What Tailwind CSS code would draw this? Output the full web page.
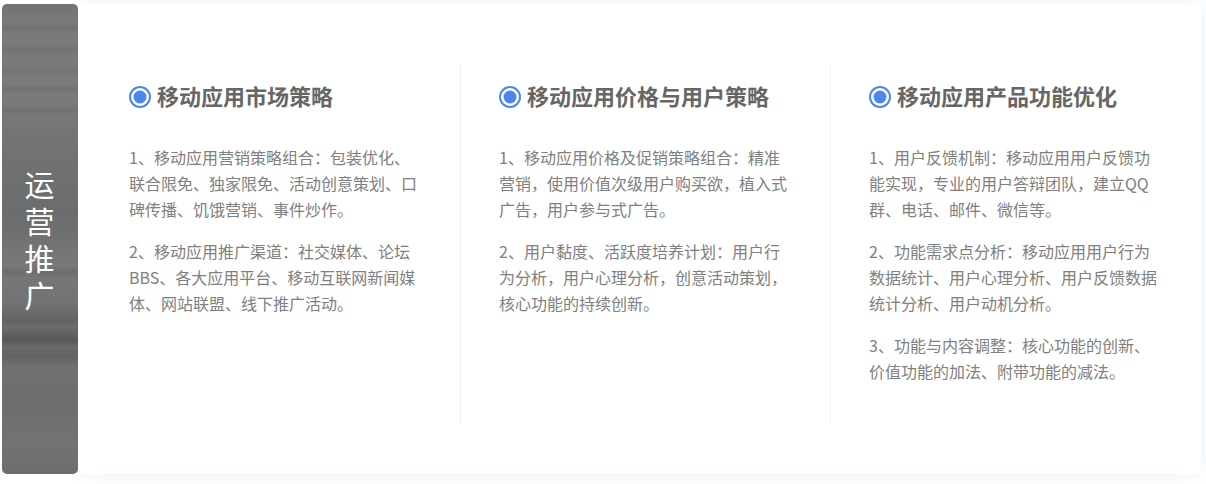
<!DOCTYPE html>
<html lang="zh-CN">
<head>
  <meta charset="UTF-8" />
  <meta name="viewport" content="width=device-width, initial-scale=1" />
  <title>运营推广</title>
  <script src="https://cdn.jsdelivr.net/npm/@tailwindcss/browser@4"></script>
</head>
<body class="w-[1206px] h-[484px] overflow-hidden bg-white font-['Noto_Sans_CJK_SC',sans-serif]">
  <main class="flex w-[1206px] h-[484px] pt-[3px] pl-[2px] pr-[5px] pb-[10px]">
    <aside class="relative z-10 w-[76px] mt-[1px] shrink-0 rounded-[5px] flex items-center justify-center bg-[#737475] bg-[linear-gradient(180deg,#717273_0px,#797a7a_18px,#707171_24px,#797a7a_30px,#797a7a_40px,#717272_46px,#797a7a_52px,#797a7a_60px,#727373_66px,#797a7a_72px,#797a7a_80px,#717272_85px,#797a7a_90px,#797a7a_100px,#707171_106px,#777878_112px,#737475_130px,#6f7071_170px,#6a6c6d_210px,#727373_240px,#7a7979_262px,#6c6d6d_268px,#767676_273px,#727374_300px,#686969_310px,#626364_316px,#6b6c6d_322px,#5f6061_330px,#565758_336px,#68696a_343px,#616263_352px,#6f7071_362px,#6d6e6f_400px,#727374_440px,#6b6d6e_470px)]">
      <h2 class="w-[32px] -ml-[1px] text-[30px] leading-[37px] text-white text-center">运营推广</h2>
    </aside>
    <section class="flex-1 flex pt-[61px] bg-white rounded-[6px] shadow-[0_0_20px_#e8f1fa]">
      <article class="w-[383px] h-[360px] pl-[51px] pr-[40px] border-r border-[#f0f1f2]">
        <h3 class="flex items-center gap-[6px] h-[62px] text-[22px] font-bold text-[#666666]">
          <svg class="w-[22px] h-[22px] mt-[4px] shrink-0" viewBox="0 0 22 22"><circle cx="11" cy="11" r="10" fill="none" stroke="#4a86f0" stroke-width="2"/><circle cx="11" cy="11" r="6.5" fill="#4a86f0"/></svg>
          移动应用市场策略
        </h3>
        <div class="mt-[18px] text-[16px] leading-[26px] text-[#808080] space-y-[16px]">
          <p>1、移动应用营销策略组合：包装优化、联合限免、独家限免、活动创意策划、口碑传播、饥饿营销、事件炒作。</p>
          <p>2、移动应用推广渠道：社交媒体、论坛BBS、各大应用平台、移动互联网新闻媒体、网站联盟、线下推广活动。</p>
        </div>
      </article>
      <article class="w-[370px] h-[360px] pl-[38px] pr-[40px] border-r border-[#f0f1f2]">
        <h3 class="flex items-center gap-[6px] h-[62px] text-[22px] font-bold text-[#666666]">
          <svg class="w-[22px] h-[22px] mt-[4px] shrink-0" viewBox="0 0 22 22"><circle cx="11" cy="11" r="10" fill="none" stroke="#4a86f0" stroke-width="2"/><circle cx="11" cy="11" r="6.5" fill="#4a86f0"/></svg>
          移动应用价格与用户策略
        </h3>
        <div class="mt-[18px] text-[16px] leading-[26px] text-[#808080] space-y-[16px]">
          <p>1、移动应用价格及促销策略组合：精准营销，使用价值次级用户购买欲，植入式广告，用户参与式广告。</p>
          <p>2、用户黏度、活跃度培养计划：用户行为分析，用户心理分析，创意活动策划，核心功能的持续创新。</p>
        </div>
      </article>
      <article class="flex-1 h-[360px] pl-[38px] pr-[42px]">
        <h3 class="flex items-center gap-[6px] h-[62px] text-[22px] font-bold text-[#666666]">
          <svg class="w-[22px] h-[22px] mt-[4px] shrink-0" viewBox="0 0 22 22"><circle cx="11" cy="11" r="10" fill="none" stroke="#4a86f0" stroke-width="2"/><circle cx="11" cy="11" r="6.5" fill="#4a86f0"/></svg>
          移动应用产品功能优化
        </h3>
        <div class="mt-[18px] text-[16px] leading-[26px] text-[#808080] space-y-[16px]">
          <p>1、用户反馈机制：移动应用用户反馈功能实现，专业的用户答辩团队，建立QQ群、电话、邮件、微信等。</p>
          <p>2、功能需求点分析：移动应用用户行为数据统计、用户心理分析、用户反馈数据统计分析、用户动机分析。</p>
          <p>3、功能与内容调整：核心功能的创新、价值功能的加法、附带功能的减法。</p>
        </div>
      </article>
    </section>
  </main>
</body>
</html>
